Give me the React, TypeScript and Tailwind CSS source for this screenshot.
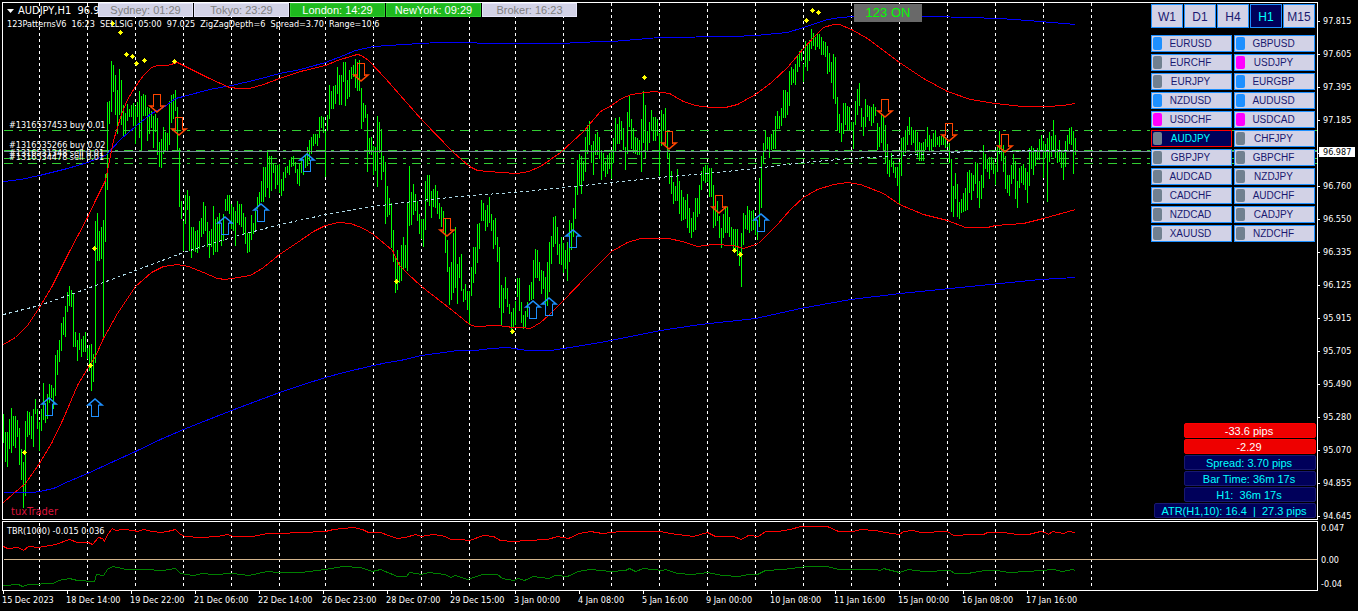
import { useState } from 'react'

type Point = [number, number]

interface BarRun {
    x: number;
    bars: string;
}

// High/low of every bar in plot pixels, one bar each second pixel from x
const barRuns: BarRun[] = [
    { x: 3, bars: '413-442 431-461 431-466 418-448 407-452 415-445 415-447 419-436 427-464 448-479 461-507 420-495 410-436 411-434 415-438 408-446 398-413 408-428 421-450 408-430 382-419 402-422 393-418 383-402 384-397 387-408 354-395 349-374 339-361 322-350 316-334 305-336' },
    { x: 67, bars: '291-311 285-305 289-306 292-346 331-346 339-360 332-349 338-356 335-351 331-351 347-358 344-370 343-390 353-381 220-362 212-260 230-260 226-258 219-338 173-241 101-189 100-123 60-111 64-91 74-114 89-133 68-114 79-124 104-135 112-134 103-120 108-116 104-116 102-125 105-143 101-116' },
    { x: 139, bars: '90-137 95-150 93-115 94-115 106-140 107-133 110-127 115-147 113-131 117-154 141-166 138-167 126-153 131-150 132-150 100-144 94-122 93-118 89-110 106-151 147-206 200-218 220-250 194-223 189-209 195-250 226-257 226-250 230-251 229-252 220-248' },
    { x: 201, bars: '217-236 201-233 205-230 221-246 230-257 228-246 205-254 218-251 216-251 212-241 222-245 213-240 198-210 194-210 194-213 203-228 206-230 210-245 200-222 203-224 203-226 212-234 216-243 232-252 231-251 214-239 222-233 210-229 196-208 191-204 180-201 166-201 166-196 149-187 155-197 155-190' },
    { x: 273, bars: '163-172 164-188 164-184 163-192 178-195 171-190 166-177 165-172 159-174 156-166 155-165 161-172 168-183 163-185' },
    { x: 301, bars: '157-172 158-174 155-167 146-165 139-160 136-153 133-145 133-143 133-145 116-137 115-127 116-132 130-176 114-130 84-118 90-108 85-108 84-103 66-93 74-104 74-104 61-81 61-105 79-98 69-96 66-78 64-76 58-87 61-90 59-90 87-128 102-121 104-117 113-171 137-153 136-154 145-174 146-170 115-186 121-152 128-179 155-171' },
    { x: 385, bars: '161-223 185-216 197-214 202-247 229-261 255-292 249-289 261-282 244-280 236-268 244-267 202-270 165-225 191-224 183-214 193-210 200-220 213-233 218-238 218-246 180-229 174-201 174-205 190-217 188-206 184-207 190-213 202-218 206-226 210-232 218-252 239-271 266-304 261-299 232-292 226-287 263-303 256-277 253-290 288-301 283-299 290-309' },
    { x: 469, bars: '290-323 266-295 246-282 246-273 223-262 222-248 199-220 202-220 209-230 204-226 196-222 213-230 219-248 217-244 236-261 246-307 284-324 287-312 276-298 287-306 303-313 311-333 307-326 300-324 277-296 277-310 301-322 314-328 310-326 301-316 284-300 281-299 259-298 248-277 249-277 261-280 269-293 270-288 276-306 261-305 241-291 235-263' },
    { x: 553, bars: '216-246 215-243 226-254 243-263 236-264 242-272 249-268 241-280 219-261 222-249 207-236 185-218 159-194 153-185 155-193 160-180 136-171 124-153 120-144 144-162 140-174 133-154 131-154 136-158' },
    { x: 601, bars: '149-179 152-170 160-176 154-173 152-168 150-178 137-162 117-150 123-143 116-143 120-139 127-149 146-169 111-153 95-126 118-148 127-152 136-153 137-154 139-154 118-171 90-142 104-157 130-151 121-142 109-130 116-140 116-140 118-135 132-175 109-145 113-130 107-144 129-158 152-183 170-193 181-203 185-200 168-200 180-213 189-220 196-219 199-218 193-227 207-232 217-237 211-231' },
    { x: 695, bars: '197-229 197-216 184-213 170-189 166-180 164-182 164-181 167-196 167-196 184-227 200-225 200-220 215-237 227-247 213-237 205-232 206-232 216-236 226-245 228-249 228-250 228-255 250-265 232-286 212-244 214-228 205-229 209-232 210-230 209-229 216-234 230-239 177-226 155-207 142-163 129-150 136-148 136-157 133-149 129-148 115-148 110-128 115-128 107-125' },
    { x: 783, bars: '89-117 89-117 91-114 70-105 66-84 68-82 63-84 55-71 50-66 48-60 63-81 40-66 43-70 39-60 28-48 32-45 36-49 33-46 33-48 36-54 40-54 41-56 45-73 52-71 61-82 53-98 56-103 96-129 113-132 122-141 102-133 102-124 105-130 106-130 121-130 148-121 100-124 88-114 82-105 107-126 135-116 98-126 104-116 105-120 106-125 103-122 106-115' },
    { x: 877, bars: '122-149 126-146 113-142 114-149 124-162 143-173 159-176 152-166 160-172 166-177 166-185 161-204 137-175 136-154 129-152 125-144 116-134 126-144 129-142 129-152 131-156 141-160 142-160 141-160 138-149 126-146 134-150 138-151 132-146 129-146 136-144 135-146' },
    { x: 941, bars: '135-144 134-144 138-147 143-146 142-162 158-211 185-216 172-198 183-216 201-218 198-212 192-211 187-210 171-209 169-192 172-199 174-190 161-183 162-197 180-207 174-198 144-187 153-168 158-171 156-178 156-169 159-173 164-184 146-171 130-153 139-160 144-171 155-188 174-192 174-195 164-183 153-178 160-198 180-207 167-187 165-182 163-184 167-189 171-202' },
    { x: 1029, bars: '147-185 145-168 147-174 150-165 147-159 138-159 134-150 140-177 143-157 137-201 131-161 135-156 119-151 134-157 148-162 139-161 150-167 152-179 140-166 134-149 127-143 126-144 130-173 137-154' },
]

const upperRed: Point[] = [[3,344],[15,337],[27,325],[39,307],[51,287],[69,251],[87,217],[95,200],[105,180],[109,160],[113,140],[121,114],[127,99],[135,86],[143,75],[151,67],[157,65],[167,65],[177,62],[183,65],[209,78],[229,87],[239,88],[249,88],[263,84],[279,78],[300,71],[325,65],[337,60],[353,55],[357,54],[361,55],[368,60],[385,78],[421,119],[453,152],[469,166],[477,170],[500,172],[517,173],[528,171],[540,166],[560,152],[583,131],[600,111],[611,105],[621,98],[631,94],[653,91],[669,93],[683,101],[695,105],[710,107],[725,107],[737,104],[755,94],[771,82],[787,67],[803,48],[815,35],[823,27],[833,24],[839,24],[851,29],[867,38],[899,62],[923,78],[947,91],[970,99],[995,103],[1022,106],[1047,106],[1063,105],[1075,103]]

const lowerRed: Point[] = [[3,502],[13,493],[25,483],[39,463],[51,443],[63,418],[71,399],[77,385],[87,368],[95,356],[103,338],[117,313],[135,286],[151,272],[163,266],[177,264],[188,266],[203,272],[217,278],[225,279],[231,278],[250,275],[263,267],[279,254],[300,240],[313,231],[325,225],[338,222],[350,223],[363,228],[373,234],[392,250],[399,265],[407,273],[421,286],[443,303],[457,314],[469,324],[475,326],[497,325],[513,327],[520,327],[530,328],[540,322],[548,315],[563,300],[587,275],[611,251],[627,242],[640,238],[668,238],[682,241],[697,246],[713,244],[733,245],[743,248],[758,243],[777,224],[790,209],[803,197],[817,189],[833,184],[847,182],[860,184],[883,193],[899,204],[923,214],[947,220],[965,227],[987,227],[995,225],[1023,223],[1043,218],[1075,209]]

const upperBlue: Point[] = [[3,181],[20,179],[39,175],[67,168],[87,162],[105,155],[121,138],[135,126],[151,113],[163,107],[175,98],[183,96],[209,89],[231,85],[257,79],[279,73],[300,69],[325,62],[343,55],[355,50],[373,46],[403,44],[438,42],[513,43],[560,43],[600,41],[612,41],[659,37],[733,36],[755,35],[787,32],[803,27],[827,19],[840,17],[853,16],[933,16],[1000,18],[1040,21],[1075,24]]

const lowerBlue: Point[] = [[3,492],[32,492],[39,491],[53,488],[68,481],[87,473],[113,461],[135,451],[160,439],[183,429],[231,410],[279,392],[300,385],[325,377],[343,372],[373,365],[387,362],[400,360],[421,355],[443,352],[457,350],[475,350],[490,348],[507,347],[527,350],[550,350],[563,348],[600,342],[630,336],[660,330],[700,324],[755,318],[800,308],[850,299],[900,293],[950,288],[1000,283],[1040,279],[1075,277]]

const midLine: Point[] = [[3,314],[39,305],[87,288],[135,270],[183,252],[231,237],[279,224],[303,219],[325,214],[373,206],[421,200],[469,195],[515,192],[563,187],[603,183],[659,177],[707,173],[755,168],[803,162],[851,158],[900,155],[940,153],[970,151],[1075,150]]

const tbrRed: Point[] = [[3,546],[7,548],[18,547],[23,550],[28,546],[38,547],[55,544],[69,539],[77,542],[88,542],[92,544],[98,537],[102,538],[104,541],[107,534],[112,528],[115,530],[123,529],[133,530],[137,531],[143,529],[152,531],[160,532],[167,531],[175,529],[180,534],[185,536],[200,537],[217,536],[227,534],[233,536],[252,536],[267,533],[279,533],[300,532],[325,531],[333,529],[343,528],[353,527],[362,529],[368,532],[380,532],[388,535],[397,538],[405,537],[415,534],[421,536],[433,534],[445,536],[450,539],[460,539],[469,540],[483,535],[493,536],[500,540],[512,541],[527,540],[547,539],[557,536],[568,538],[579,533],[590,531],[602,533],[620,531],[660,531],[670,533],[677,534],[693,536],[707,532],[715,536],[733,536],[741,539],[748,535],[758,536],[765,531],[777,531],[790,529],[800,526],[827,526],[838,531],[853,531],[860,529],[875,530],[885,532],[899,534],[903,531],[913,530],[920,532],[947,531],[953,535],[973,534],[983,534],[987,532],[1003,532],[1017,534],[1028,534],[1040,531],[1045,532],[1048,534],[1052,531],[1063,533],[1068,531],[1075,532]]

const tbrGreen: Point[] = [[3,585],[18,584],[22,586],[28,584],[53,583],[58,580],[69,578],[77,580],[94,581],[96,574],[103,575],[107,569],[112,566],[122,568],[125,569],[143,569],[163,570],[175,568],[180,573],[193,575],[202,573],[213,574],[233,573],[248,575],[267,571],[277,572],[300,572],[325,569],[343,566],[360,567],[372,571],[380,569],[397,576],[406,576],[409,572],[421,574],[428,572],[445,574],[450,577],[455,575],[467,579],[482,574],[497,574],[502,578],[513,580],[518,578],[524,580],[533,576],[548,578],[555,575],[567,576],[578,571],[590,569],[611,571],[625,570],[629,568],[635,571],[643,568],[662,570],[665,569],[677,573],[692,574],[707,572],[722,575],[738,576],[748,574],[757,574],[765,570],[783,569],[807,566],[827,566],[838,569],[875,569],[880,570],[883,568],[899,572],[908,569],[923,571],[950,570],[954,573],[967,573],[985,570],[997,570],[1008,572],[1027,571],[1053,569],[1062,571],[1072,569],[1075,570]]

const daySeparators = [39, 87, 135, 183, 231, 279, 325, 373, 421, 469, 515, 563, 611, 659, 707, 755, 803, 851, 899, 947, 995, 1043, 1091]
const orderLevels = [130, 150, 158, 163]

const sellArrows: Point[] = [[157,94],[179,117],[361,63],[447,218],[669,131],[719,195],[885,99],[949,123],[1005,134]]
const buyArrows: Point[] = [[49,397],[95,398],[225,216],[261,203],[307,153],[533,300],[549,297],[573,229],[761,213]]
const pivots: Point[] = [[113,23],[121,32],[127,54],[133,56],[137,63],[145,60],[175,61],[95,248],[91,365],[25,452],[397,281],[513,331],[645,77],[807,20],[813,10],[819,12],[735,250],[741,254]]

const prices = ['97.815', '97.605', '97.395', '97.185', '', '96.760', '96.550', '96.335', '96.125', '95.915', '95.705', '95.490', '95.280', '95.070', '94.855', '94.645']

const dates = ['15 Dec 2023', '18 Dec 14:00', '19 Dec 22:00', '21 Dec 06:00', '22 Dec 14:00', '26 Dec 23:00', '28 Dec 07:00', '29 Dec 15:00', '3 Jan 00:00', '4 Jan 08:00', '5 Jan 16:00', '9 Jan 00:00', '10 Jan 08:00', '11 Jan 16:00', '15 Jan 00:00', '16 Jan 08:00', '17 Jan 16:00']

const sessions = [
    { label: 'Sydney: 01:29', open: false },
    { label: 'Tokyo: 23:29', open: false },
    { label: 'London: 14:29', open: true },
    { label: 'NewYork: 09:29', open: true },
    { label: 'Broker: 16:23', open: false },
]

const timeframes = ['W1', 'D1', 'H4', 'H1', 'M15']

const pairs = [
    { name: 'EURUSD', dot: 'bg-[#1e90ff]' },
    { name: 'GBPUSD', dot: 'bg-[#1e90ff]' },
    { name: 'EURCHF', dot: 'bg-[#708090]' },
    { name: 'USDJPY', dot: 'bg-[#ff00ff]' },
    { name: 'EURJPY', dot: 'bg-[#708090]' },
    { name: 'EURGBP', dot: 'bg-[#1e90ff]' },
    { name: 'NZDUSD', dot: 'bg-[#1e90ff]' },
    { name: 'AUDUSD', dot: 'bg-[#1e90ff]' },
    { name: 'USDCHF', dot: 'bg-[#ff00ff]' },
    { name: 'USDCAD', dot: 'bg-[#ff00ff]' },
    { name: 'AUDJPY', dot: 'bg-[#708090]' },
    { name: 'CHFJPY', dot: 'bg-[#708090]' },
    { name: 'GBPJPY', dot: 'bg-[#708090]' },
    { name: 'GBPCHF', dot: 'bg-[#708090]' },
    { name: 'AUDCAD', dot: 'bg-[#708090]' },
    { name: 'NZDJPY', dot: 'bg-[#708090]' },
    { name: 'CADCHF', dot: 'bg-[#708090]' },
    { name: 'AUDCHF', dot: 'bg-[#708090]' },
    { name: 'NZDCAD', dot: 'bg-[#708090]' },
    { name: 'CADJPY', dot: 'bg-[#708090]' },
    { name: 'XAUUSD', dot: 'bg-[#708090]' },
    { name: 'NZDCHF', dot: 'bg-[#708090]' },
]

const barPath = barRuns
    .map((run) =>
        run.bars
            .split(' ')
            .map((bar, i) => {
                const [high, low] = bar.split('-')
                return `M${run.x + i * 2} ${high}V${low}`
            })
            .join('')
    )
    .join('')

const toPoints = (points: Point[]) => points.map((p) => p.join(',')).join(' ')

function DaySeparators({ top, bottom }: { top: number; bottom: number }) {
    return (
        <path
            d={daySeparators.map((x) => `M${x} ${top}V${bottom}`).join('')}
            stroke="#fff"
            strokeDasharray="3 3"
        />
    )
}

function SellArrow({ x, y }: { x: number; y: number }) {
    return (
        <g stroke="#ff4500">
            <path d={`M${x - 3.5} ${y + 12.5}v-12h7v12`} />
            <path
                d={`M${x - 3.5} ${y + 12}h-3.5l7 6l7 -6h-3.5`}
                strokeWidth={1.6}
                shapeRendering="geometricPrecision"
            />
        </g>
    )
}

function BuyArrow({ x, y }: { x: number; y: number }) {
    return (
        <g stroke="#1e90ff">
            <path d={`M${x - 3.5} ${y + 6.5}v12h7v-12`} />
            <path
                d={`M${x - 3.5} ${y + 7}h-3.5l7 -6l7 6h-3.5`}
                strokeWidth={1.6}
                shapeRendering="geometricPrecision"
            />
        </g>
    )
}

function PriceChart() {
    return (
        <svg
            className="block h-[516px] w-full"
            viewBox="3 3 1314 516"
            preserveAspectRatio="none"
            shapeRendering="crispEdges"
            fill="none"
        >
            <g transform="translate(0.5 0.5)">
                <DaySeparators top={2} bottom={519} />
                <path d={barPath} stroke="#00ff00" />
                <path d="M3 151H1317" stroke="#778899" />
                {orderLevels.map((y) => (
                    <path key={y} d={`M3 ${y}H1317`} stroke="#32cd32" strokeDasharray="9 6 3 6" />
                ))}
                <polyline points={toPoints(upperBlue)} stroke="#0000ff" />
                <polyline points={toPoints(lowerBlue)} stroke="#0000ff" />
                <polyline points={toPoints(upperRed)} stroke="#ff0000" />
                <polyline points={toPoints(lowerRed)} stroke="#ff0000" />
                <polyline points={toPoints(midLine)} stroke="#add8e6" strokeDasharray="3 3" />
            </g>
            {pivots.map(([x, y]) => (
                <path key={`${x}-${y}`} d={`M${x - 3} ${y}h5v1h-5zM${x - 2} ${y - 1}h3v3h-3zM${x - 1} ${y - 2}h1v5h-1z`} fill="#ffff00" />
            ))}
            {sellArrows.map(([x, y]) => (
                <SellArrow key={x} x={x} y={y} />
            ))}
            {buyArrows.map(([x, y]) => (
                <BuyArrow key={x} x={x} y={y} />
            ))}
        </svg>
    )
}

function OscillatorChart() {
    return (
        <svg
            className="block h-[68px] w-full"
            viewBox="3 522 1314 68"
            preserveAspectRatio="none"
            shapeRendering="crispEdges"
            fill="none"
        >
            <g transform="translate(0.5 0.5)">
                <DaySeparators top={522} bottom={587} />
                <path d="M3 559H1317" stroke="#d2b48c" />
                <polyline points={toPoints(tbrRed)} stroke="#ff0000" />
                <polyline points={toPoints(tbrGreen)} stroke="#008000" />
            </g>
        </svg>
    )
}

function SessionTabs() {
    return (
        <div className="absolute left-[95px] top-0 flex gap-px">
            {sessions.map((session) => (
                <button
                    key={session.label}
                    className={`h-3.5 w-[95px] border text-[11px] leading-3 ${session.open ? 'border-[#32cd32] bg-[#1eb91e] text-white' : 'border-[#e6e6fa] bg-[#d2d2e6] text-[#808080]'}`}
                >
                    {session.label}
                </button>
            ))}
        </div>
    )
}

function SymbolPanel() {
    const [timeframe, setTimeframe] = useState('H1')
    const [symbol, setSymbol] = useState('AUDJPY')

    return (
        <div className="absolute right-0.5 top-px w-[164px]">
            <div className="grid grid-cols-5 gap-px">
                {timeframes.map((tf) => (
                    <button
                        key={tf}
                        onClick={() => setTimeframe(tf)}
                        className={`h-6 border border-[#1e90ff] pt-px text-xs ${tf === timeframe ? 'bg-[#00005a] text-[#00ffff]' : 'bg-[#d2d2e6] text-[#191970]'}`}
                    >
                        {tf}
                    </button>
                ))}
            </div>
            <div className="mt-[7px] grid grid-cols-2 gap-0.5">
                {pairs.map((pair) => (
                    <button
                        key={pair.name}
                        onClick={() => setSymbol(pair.name)}
                        className={`relative h-[17px] border pr-0.5 pt-px text-[10px] leading-[14px] ${pair.name === symbol ? 'border-[#ff0000] bg-[#00005a] text-[#00ffff]' : 'border-[#1e90ff] bg-[#d2d2e6] text-[#191970]'}`}
                    >
                        <span className={`absolute left-px top-px h-[13px] w-[9px] rounded-xs ${pair.dot}`} />
                        {pair.name}
                    </button>
                ))}
            </div>
        </div>
    )
}

function TradeInfo() {
    return (
        <div className="absolute bottom-px right-px flex flex-col items-end gap-px text-center text-[11px] leading-3 text-[#00ffff]">
            <div className="w-[132px] rounded-xs border border-[#ff0000] bg-[#ee0000] pr-0.5 pt-px text-white">-33.6 pips</div>
            <div className="w-[132px] rounded-xs border border-[#ff0000] bg-[#ee0000] pr-0.5 pt-px text-white">-2.29</div>
            <div className="w-[132px] rounded-xs border border-[#191970] bg-[#00005a] pr-0.5 pt-px">Spread: 3.70 pips</div>
            <div className="w-[132px] rounded-xs border border-[#191970] bg-[#00005a] pr-0.5 pt-px">Bar Time: 36m 17s</div>
            <div className="w-[132px] whitespace-pre rounded-xs border border-[#191970] bg-[#00005a] pr-0.5 pt-px">H1:  36m 17s</div>
            <div className="w-[162px] whitespace-pre rounded-xs border border-[#191970] bg-[#00005a] pr-0.5 pt-px">ATR(H1,10): 16.4  |  27.3 pips</div>
        </div>
    )
}

function OrderLabels() {
    return (
        <div className="absolute left-1.5 top-[116px] whitespace-pre text-[9px] leading-3">
            <p className="mb-2">#1316537453 buy 0.01</p>
            <p>#1316535266 buy 0.02</p>
            <p className="-mt-1">#1316531348 sell 0.01</p>
            <p className="-mt-2">#1316534478 sell 0.01</p>
        </div>
    )
}

function PriceAxis() {
    return (
        <div className="relative w-10 shrink-0 pt-[3px] text-[9px]">
            {prices.map((price, i) => (
                <div key={i} className="flex h-[33px] items-center gap-[3px]">
                    <span className="h-px w-0.5 bg-white" />
                    {price}
                </div>
            ))}
            <div className="absolute left-px top-[145px] h-2.5 w-9 bg-white pl-1 leading-[10px] text-black">96.987</div>
        </div>
    )
}

export default function App() {
    return (
        <div className="min-h-screen w-full overflow-hidden bg-black pt-0.5 font-['DejaVu_Sans_Condensed','Noto_Sans',sans-serif] text-white">
            <div className="flex h-[518px]">
                <div className="relative ml-0.5 min-w-0 flex-1 border border-white">
                    <PriceChart />
                    <div className="absolute left-1 top-0.5 flex items-center gap-1 text-[11px] leading-3">
                        <svg className="h-1 w-[7px]" viewBox="0 0 7 4">
                            <path d="M0 0h7L3.5 4z" fill="#fff" />
                        </svg>
                        <span className="whitespace-pre">AUDJPY,H1  96.99</span>
                    </div>
                    <p className="absolute left-1 top-3.5 whitespace-pre text-[9px] leading-[14px]">
                        123PatternsV6  16:23  SELLSIG  05:00  97.025  ZigZagDepth=6  Spread=3.70  Range=10.6
                    </p>
                    <OrderLabels />
                    <p className="absolute bottom-px left-2 text-[11px] leading-3 text-[#dc143c]">tuxTrader</p>
                    <div className="font-['Liberation_Sans',Arial,sans-serif]">
                        <SessionTabs />
                        <button className="absolute left-[851px] top-px h-[18px] w-[68px] bg-[#696969] text-[13px] leading-[18px] text-[#00ff00]">
                            123 ON
                        </button>
                        <SymbolPanel />
                        <TradeInfo />
                    </div>
                </div>
                <PriceAxis />
            </div>

            <div className="mt-px flex h-[70px]">
                <div className="relative ml-0.5 min-w-0 flex-1 border border-white">
                    <OscillatorChart />
                    <p className="absolute left-1 top-0.5 text-[9px] leading-[14px]">TBR(1000) -0.015 0.036</p>
                </div>
                <div className="flex w-10 shrink-0 flex-col pl-[3px] text-[9px] leading-3">
                    <span className="mt-px">0.047</span>
                    <span className="mt-5">0.00</span>
                    <span className="mt-3">-0.04</span>
                </div>
            </div>

            <div className="ml-0.5 flex text-[9px] leading-3">
                {dates.map((date) => (
                    <div key={date} className="w-16 shrink-0 whitespace-nowrap">
                        <div className="ml-px h-[3px] w-px bg-white" />
                        {date}
                    </div>
                ))}
            </div>
        </div>
    )
}
